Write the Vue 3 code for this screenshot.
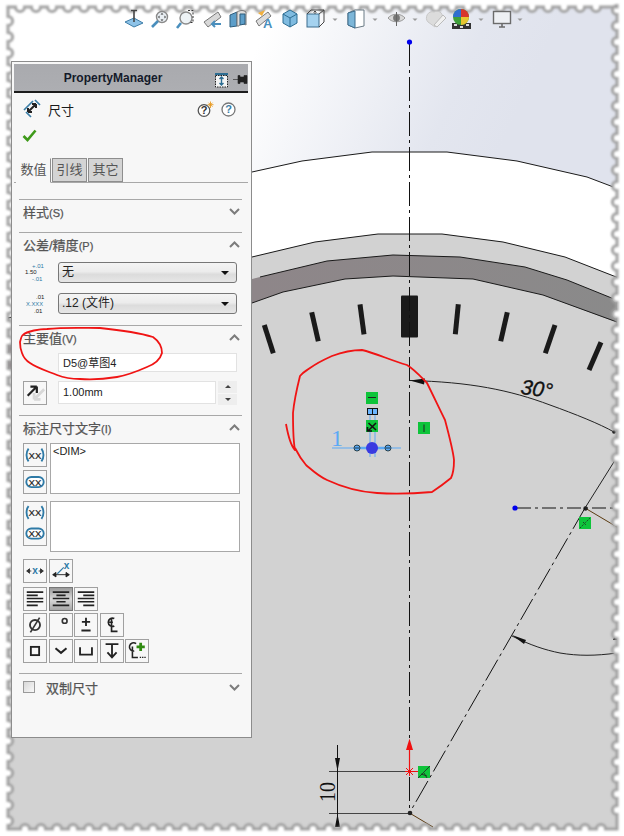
<script setup>
function buildEdge() {
  const L = 8, T = 7, R = 617, B = 829, r = 4.6
  let d = `M${L} ${T}`
  for (let x = 20; x < R - 8; x += 16) d += `L${x - r} ${T}A${r} ${r} 0 0 0 ${x + r} ${T}`
  d += `L${R} ${T}`
  for (let y = 10; y < B - 8; y += 16) d += `L${R} ${y - r}A${r} ${r} 0 0 0 ${R} ${y + r}`
  d += `L${R} ${B}`
  for (let x = 601; x > L + 8; x -= 16) d += `L${x + r} ${B}A${r} ${r} 0 0 0 ${x - r} ${B}`
  d += `L${L} ${B}`
  for (let y = 821; y > T + 8; y -= 16) d += `L${L} ${y + r}A${r} ${r} 0 0 0 ${L} ${y - r}`
  return d + 'Z'
}
const edge = buildEdge()
const outside = `M0 0H624V836H0Z ${edge}`

const ticks = [
  [264.3, 325, 273.3, 353.3], [311.7, 312.3, 318.3, 341.3], [360, 304.3, 364, 334.3],
  [458.3, 304.3, 455.3, 334.3], [507.3, 312.3, 500.7, 341.3], [555, 325, 545.3, 353.3], [601, 342.3, 589, 370]
]
const carets = [335, 375, 415, 481, 520]
const sketchBlue = '#5aa9f5'
</script>

<template>
  <div class="page">
    <svg class="canvas" width="624" height="836" viewBox="0 0 624 836">
      <defs>
        <linearGradient id="sky" gradientUnits="userSpaceOnUse" x1="260" y1="40" x2="500" y2="150">
          <stop offset="0" stop-color="#ffffff" />
          <stop offset="0.75" stop-color="#e3e6ef" />
          <stop offset="1" stop-color="#e0e3ed" />
        </linearGradient>
        <linearGradient id="ring" gradientUnits="userSpaceOnUse" x1="252" y1="0" x2="620" y2="0">
          <stop offset="0" stop-color="#8e8689" />
          <stop offset="1" stop-color="#8a8a8a" />
        </linearGradient>
        <filter id="soft" x="-5%" y="-5%" width="110%" height="110%"><feGaussianBlur stdDeviation="1.1" /></filter>
      </defs>

      <rect width="624" height="836" fill="#d2d2d2" />
      <rect width="624" height="210" fill="url(#sky)" />
      <path d="M0 205L202 188L232 177L302 161L372 152H447L517 161L587 177L624 191V280L565 257L503 242L442 234H378L315 242L252 257L0 320Z" fill="#ffffff" />
      <path d="M202 188L232 177L252 172L302 161L372 152H447L517 161L587 177L624 191" fill="none" stroke="#1a1a1a" stroke-width="1" />
      <path d="M0 320L252 257L315 242L378 234H442L503 242L565 257L624 280V302L567 280L525 267L460 257L393 255L327 261L260 277L0 345Z" fill="#d2d2d2" />
      <path d="M0 320L252 257L315 242L378 234H442L503 242L565 257L624 280" fill="none" stroke="#1a1a1a" stroke-width="1" />
      <path d="M0 345L260 277L327 261L393 255L460 257L525 267L567 280L624 303V325L543 295L473 279L393 276L345 279L283 292L252 303L0 375Z" fill="url(#ring)" />
      <path d="M260 277L327 261L393 255L460 257L525 267L567 280L624 303" fill="none" stroke="#1a1a1a" stroke-width="1" />
      <path d="M252 303L283 292L345 279L393 276L473 279L543 295L617 322" fill="none" stroke="#1a1a1a" stroke-width="1" />

      <line v-for="(t, i) in ticks" :key="i" :x1="t[0]" :y1="t[1]" :x2="t[2]" :y2="t[3]" stroke="#1a1a1a" stroke-width="5" />
      <rect x="401" y="295.5" width="17" height="42" rx="1" fill="#1a1a1a" />

      <line x1="409.5" y1="42" x2="409.5" y2="812" stroke="#111" stroke-width="1" stroke-dasharray="24 4 3 4" />
      <circle cx="409.5" cy="42" r="2.6" fill="#0000ee" />

      <path d="M410 380.5C470 382 510 390 550 405C575 414 600 424 614 432" fill="none" stroke="#222" />
      <path d="M410 380.5L425 378.5L424 384.5Z" fill="#111" />
      <circle cx="614" cy="432" r="1.8" fill="#111" />
      <text x="521" y="396" class="deg" transform="rotate(8 537 388)">30°</text>

      <path d="M517 508H617" fill="none" stroke="#111" stroke-width="1" stroke-dasharray="14 4 3 4" />
      <circle cx="515" cy="508" r="2.6" fill="#0000ee" />
      <line x1="585" y1="508" x2="617" y2="457" stroke="#222" />
      <line x1="585" y1="508" x2="617" y2="527" stroke="#5a3a10" />
      <circle cx="585.5" cy="508.5" r="2.2" fill="#222" />
      <line x1="585" y1="508" x2="409.5" y2="813" stroke="#111" stroke-width="1" stroke-dasharray="24 4 3 4" />

      <path d="M512 636C530 645 545 650 560 653C578 656 595 656 617 653" fill="none" stroke="#222" />
      <path d="M512 635L526 640L524 644Z" fill="#111" />
      <path d="M615 635L613 640H617Z" fill="#111" />

      <rect x="579" y="517" width="12" height="12" fill="#0ec43a" />
      <path d="M580 528L590 518M583 522L586 525" stroke="#222" stroke-width="0.8" stroke-dasharray="1.5 1" />

      <g class="relations">
        <rect x="366" y="392" width="12" height="12" fill="#0ec43a" />
        <line x1="368" y1="397.5" x2="376" y2="397.5" stroke="#222" stroke-width="1" />
        <line x1="370" y1="415" x2="370" y2="457" :stroke="sketchBlue" stroke-width="1.6" opacity="0.6" />
        <line x1="375" y1="415" x2="375" y2="457" :stroke="sketchBlue" stroke-width="1.6" opacity="0.6" />
        <rect x="367.5" y="408.5" width="10" height="6" fill="#6bb6ff" stroke="#111" />
        <line x1="372.5" y1="408" x2="372.5" y2="415" stroke="#111" />
        <rect x="366" y="420" width="12" height="12" fill="#0ec43a" />
        <path d="M368 431L376 423M368.5 423L376 430M367.5 427V431H372" fill="none" stroke="#111" stroke-width="1.6" />
        <rect x="418" y="422" width="12" height="12" fill="#0ec43a" />
        <line x1="424" y1="424.5" x2="424" y2="432" stroke="#222" />
        <line x1="332" y1="448" x2="401" y2="448" :stroke="sketchBlue" stroke-width="1" />
        <line x1="360" y1="448" x2="386" y2="448" :stroke="sketchBlue" stroke-width="2.5" />
        <circle cx="357" cy="448" r="3" :fill="sketchBlue" stroke="#122" stroke-width="0.8" />
        <line x1="355" y1="448" x2="359" y2="448" stroke="#122" stroke-width="0.8" />
        <circle cx="388" cy="448" r="3" :fill="sketchBlue" stroke="#122" stroke-width="0.8" />
        <line x1="386" y1="448" x2="390" y2="448" stroke="#122" stroke-width="0.8" />
        <circle cx="372" cy="448" r="6" fill="#3a3ae0" />
        <text x="331" y="446" class="one">1</text>
      </g>

      <line x1="329" y1="771.5" x2="409" y2="771.5" stroke="#444" stroke-width="1.2" />
      <line x1="329" y1="813.5" x2="409" y2="813.5" stroke="#444" stroke-width="1.2" />
      <line x1="337.5" y1="745" x2="337.5" y2="827" stroke="#111" stroke-width="1" />
      <path d="M335 758H340L337.5 771Z M335 827H340L337.5 814Z" fill="#111" />
      <text class="ten" x="0" y="0" transform="translate(334.5 792) rotate(-90)" text-anchor="middle" textLength="20" lengthAdjust="spacingAndGlyphs">10</text>
      <line x1="409.5" y1="813" x2="433" y2="827" stroke="#5a3a10" stroke-width="1" />
      <circle cx="410" cy="813" r="2.3" fill="#222" />

      <line x1="409.5" y1="745" x2="409.5" y2="771" stroke="#f01010" stroke-width="1.2" />
      <path d="M409.5 738.5L413 750H406Z" fill="#f01010" />
      <path d="M406 768L413 775M413 768L406 775M405 771.5H418M409.5 767V776" stroke="#f01010" stroke-width="1" />
      <rect x="418" y="766" width="12" height="12" fill="#0ec43a" />
      <path d="M418 778L430 766M424 773L427 778M421 774L427 776" stroke="#222" stroke-width="0.8" />

      <!-- edge of the cut-out picture -->
      <path :d="outside" fill="#fff" fill-rule="evenodd" />
      <path :d="edge" fill="none" stroke="#a2a2a2" stroke-width="3" filter="url(#soft)" />

      <!-- heads-up toolbar -->
      <g class="toolbar">
        <path d="M125 22L134 18L143 23L134 27Z" fill="#8ec3e8" stroke="#3d7da8" />
        <line x1="134" y1="10" x2="134" y2="22" stroke="#444" stroke-width="1.6" />
        <line x1="131" y1="10.5" x2="137" y2="10.5" stroke="#444" stroke-width="1.4" />

        <circle cx="162" cy="17" r="5.5" fill="#e8eef3" stroke="#8a8a8a" stroke-width="1.4" />
        <line x1="158" y1="21" x2="152" y2="27" stroke="#4a8fbd" stroke-width="2.6" />
        <path d="M162 13l-1.5 1.5h3zM162 21l-1.5-1.5h3zM158 17l1.5-1.5v3zM166 17l-1.5-1.5v3z" fill="#333" />

        <circle cx="186" cy="18" r="6" fill="#eef3f6" stroke="#8a8a8a" stroke-width="1.4" />
        <line x1="181" y1="23" x2="177" y2="28" stroke="#4a8fbd" stroke-width="2.6" />
        <path d="M188 10.5h5v12h-3" fill="none" stroke="#333" stroke-dasharray="2 1.5" />

        <path d="M204 22L218 12L221 17L208 27Z" fill="#d8d8d8" stroke="#777" />
        <path d="M212 24H221M215 21L212 24L215 27" fill="none" stroke="#4a8fbd" stroke-width="2" />

        <path d="M230 15L237 12V26L230 27Z" fill="#5d9ec9" stroke="#2d5d7d" />
        <path d="M237 12C241 10 243 10 246 12V25C243 23 240 24 239 26H237Z" fill="#ddd" stroke="#777" />
        <path d="M240 14H245V24L240 25Z" fill="#5d9ec9" stroke="#2d5d7d" />

        <path d="M256 21L268 12L271 16L259 26Z" fill="#ddd" stroke="#777" />
        <path d="M258 13L265 10L262 16Z" fill="#f0b040" />
        <text x="263" y="28" class="tool-a">A</text>

        <path d="M290 10L297 14V23L290 27L283 23V14Z" fill="#7fbbe0" stroke="#2d6d92" />
        <path d="M283 14L290 18L297 14M290 18V27" fill="none" stroke="#2d6d92" />

        <rect x="307" y="14" width="12" height="13" fill="#a5d2ef" stroke="#3d6d8d" />
        <path d="M307 14L311 10H324V22L319 27M319 14L324 10" fill="none" stroke="#444" />
        <path d="M315 11V14M315 11L313.5 12.5M315 11L316.5 12.5" fill="none" stroke="#333" stroke-width="0.8" />

        <path d="M348 13L355 10H364V26L355 28L348 25Z" fill="#fff" stroke="#6a7a85" />
        <path d="M348 13L355 11V28L348 25Z" fill="#7db6d8" stroke="#3d6d8d" />

        <path d="M388 18C392 13 401 13 405 18C401 23 392 23 388 18Z" fill="#d8d8d8" stroke="#999" />
        <circle cx="396.5" cy="18" r="3.4" fill="#777" />
        <line x1="396.5" y1="12" x2="396.5" y2="26" stroke="#666" />

        <path d="M435 27L428 22C424 18 428 10 434 12C440 9 445 15 441 21Z" fill="#dcdcdc" stroke="#c8c8c8" />
        <path d="M434 25L443 15L446 18L437 27Z" fill="#f0f0f0" stroke="#bbb" />

        <rect x="452" y="23" width="19" height="6" fill="#333" />
        <path d="M454 24h3v2h-3zM460 26h3v2h-3zM466 24h3v2h-3z" fill="#ddd" />
        <circle cx="461" cy="17" r="8" fill="#3fa03a" />
        <path d="M461 9A8 8 0 0 1 469 17H461Z" fill="#d8352c" />
        <path d="M453 17A8 8 0 0 1 461 9V17Z" fill="#2f6fd0" />
        <path d="M461 17H469A8 8 0 0 1 461 25Z" fill="#e8c630" />

        <rect x="493.5" y="11.5" width="17" height="12" fill="#eef0f4" stroke="#6b6b6b" stroke-width="1.4" />
        <path d="M499 27H505M502 24V27" stroke="#6b6b6b" stroke-width="1.6" fill="none" />

        <path v-for="c in carets" :key="c" :d="`M${c - 2.5} 18.5h5l-2.5 2.5z`" fill="#999" />
      </g>
    </svg>

    <aside class="panel">
      <header class="title">
        <span class="title-text">PropertyManager</span>
        <svg class="title-icons" width="34" height="16" viewBox="0 0 34 16">
          <rect x="1" y="1" width="13" height="2.5" fill="#2d6d92" />
          <rect x="1.5" y="3.5" width="12" height="11.5" fill="#f4f4f4" stroke="#222" stroke-dasharray="1.5 1" />
          <path d="M7.5 5V13M5.5 7L7.5 5L9.5 7M5.5 11L7.5 13L9.5 11" fill="none" stroke="#2d6d92" stroke-width="1.4" />
          <path d="M19 7.5H24M24 3.5H26V11.5H24ZM26 5H30V10H26ZM30 3.5H33V11.5H30Z" fill="#222" stroke="#222" stroke-width="0.6" />
        </svg>
      </header>

      <div class="feature">
        <svg width="20" height="20" viewBox="0 0 20 20">
          <path d="M1 11L10 2M3 13L8 18M12 1L17 6" fill="none" stroke="#3b7ea6" stroke-width="1.7" />
          <path d="M5 13L13 5M13 5H9M13 5V9M5 13V9M5 13H9" fill="none" stroke="#222" stroke-width="2" />
        </svg>
        <span class="feature-name">尺寸</span>
        <svg class="help-new" width="17" height="17" viewBox="0 0 17 17">
          <circle cx="7" cy="9.5" r="5.8" fill="#fff" stroke="#555" stroke-width="1.3" />
          <text x="7" y="13" class="q dark">?</text>
          <path d="M13.5 0.5V7M10.5 3.7H16.5M11.5 1.7L15.5 5.7M15.5 1.7L11.5 5.7" stroke="#e89a20" stroke-width="0.9" />
        </svg>
        <svg class="help" width="15" height="15" viewBox="0 0 15 15">
          <circle cx="7.5" cy="7.5" r="6.5" fill="#fff" stroke="#777" stroke-width="1.3" />
          <text x="7.5" y="11.2" class="q blue">?</text>
        </svg>
      </div>

      <div class="ok">
        <svg width="15" height="13" viewBox="0 0 15 13"><path d="M1.5 7L5.5 11L13.5 1.5" fill="none" stroke="#3f9a1a" stroke-width="2.6" /></svg>
      </div>

      <nav class="tabs">
        <span class="tab active">数值</span>
        <span class="tab">引线</span>
        <span class="tab">其它</span>
      </nav>

      <section class="sec sec-closed">
        <div class="head"><b>样式<small>(S)</small></b><svg class="chev" viewBox="0 0 11 7"><path d="M1 1L5.5 5.5L10 1" /></svg></div>
      </section>

      <section class="sec sec-tol">
        <div class="head"><b>公差/精度<small>(P)</small></b><svg class="chev" viewBox="0 0 11 7"><path d="M1 6L5.5 1.5L10 6" /></svg></div>
        <div class="tol-row">
          <svg class="tol-icon" width="24" height="21" viewBox="0 0 24 21">
            <text x="7" y="5.5" class="mini blue-t">+.01</text>
            <text x="0" y="12" class="mini">1.50</text>
            <text x="7" y="18.5" class="mini blue-t">-.01</text>
          </svg>
          <div class="select">无<i class="tri"></i></div>
        </div>
        <div class="tol-row">
          <svg class="tol-icon" width="24" height="21" viewBox="0 0 24 21">
            <text x="11" y="6" class="mini">.01</text>
            <text x="1" y="13" class="mini blue-t" textLength="17" lengthAdjust="spacingAndGlyphs">X.XXX</text>
            <text x="9" y="20" class="mini">.01</text>
          </svg>
          <div class="select">.12 (文件)<i class="tri"></i></div>
        </div>
      </section>

      <section class="sec sec-main">
        <div class="head"><b>主要值<small>(V)</small></b><svg class="chev" viewBox="0 0 11 7"><path d="M1 6L5.5 1.5L10 6" /></svg></div>
        <div class="field name">D5@草图4</div>
        <div class="value-row">
          <button class="btn">
            <svg viewBox="0 0 24 24">
              <path d="M22 8L11 19M11 19H18M11 19V12" fill="none" stroke="#d8d8d8" stroke-width="3" />
              <path d="M4 15L14 5M14 5H7M14 5V12" fill="none" stroke="#222" stroke-width="2.4" />
            </svg>
          </button>
          <div class="field value">1.00mm</div>
          <div class="spin">
            <span><i class="up"></i></span>
            <span><i class="down"></i></span>
          </div>
        </div>
      </section>

      <section class="sec sec-text">
        <div class="head"><b>标注尺寸文字<small>(I)</small></b><svg class="chev" viewBox="0 0 11 7"><path d="M1 6L5.5 1.5L10 6" /></svg></div>
        <div class="text-row" v-for="(content, i) in ['<DIM>', '']" :key="i">
          <div class="stack" :class="{ split: i === 0 }">
            <svg viewBox="0 0 24 22" class="paren">
              <path d="M5 4C2 8 2 14 5 18M19 4C22 8 22 14 19 18" fill="none" stroke="#2e7aa6" stroke-width="2" />
              <text x="12" y="15" class="xx">XX</text>
            </svg>
            <svg viewBox="0 0 24 22" class="paren">
              <rect x="2.5" y="5.5" width="19" height="11" rx="5.5" fill="#fff" stroke="#2e7aa6" stroke-width="2" />
              <text x="12" y="15" class="xx">XX</text>
            </svg>
          </div>
          <div class="textbox">{{ content }}</div>
        </div>

        <div class="grid first-grid">
          <button class="btn">
            <svg viewBox="0 0 24 24">
              <path d="M3 12H8M21 12H16M3 12L6 9.5V14.5ZM21 12L18 9.5V14.5Z" fill="#333" stroke="#333" />
              <text x="12" y="15.5" class="x-small">x</text>
            </svg>
          </button>
          <button class="btn">
            <svg viewBox="0 0 24 24">
              <path d="M3 16H21M3 16L6.5 13.5V18.5ZM21 16L17.5 13.5V18.5Z" fill="#222" stroke="#222" />
              <line x1="8" y1="15" x2="15" y2="8" stroke="#2e7aa6" stroke-width="1.2" />
              <text x="18" y="9.5" class="x-small">x</text>
            </svg>
          </button>
        </div>
        <div class="grid">
          <button class="btn">
            <svg viewBox="0 0 24 24"><path d="M3 4.5H21M3 8H15M3 11.5H21M3 15H21M3 19H15" stroke="#222" stroke-width="1.8" /></svg>
          </button>
          <button class="btn on">
            <svg viewBox="0 0 24 24"><path d="M3 4.5H21M7 8H17M3 11.5H21M7 15H17M3 19H21" stroke="#222" stroke-width="1.8" /></svg>
          </button>
          <button class="btn">
            <svg viewBox="0 0 24 24"><path d="M3 4.5H21M9 8H21M3 11.5H21M3 15H21M9 19H21" stroke="#222" stroke-width="1.8" /></svg>
          </button>
        </div>
        <div class="grid tight">
          <button class="btn">
            <svg viewBox="0 0 24 24"><circle cx="12" cy="12" r="5.5" fill="none" stroke="#333" stroke-width="2" /><line x1="7" y1="20" x2="17" y2="4" stroke="#333" stroke-width="1.8" /></svg>
          </button>
          <button class="btn">
            <svg viewBox="0 0 24 24"><circle cx="16" cy="7.5" r="2.6" fill="none" stroke="#333" stroke-width="1.8" /></svg>
          </button>
          <button class="btn">
            <svg viewBox="0 0 24 24"><path d="M12 4V13M7.5 8.5H16.5M7 18H17" stroke="#222" stroke-width="2" /></svg>
          </button>
          <button class="btn">
            <svg viewBox="0 0 24 24"><path d="M14.5 5A4.5 4.5 0 1 0 14.5 13M9 9H13M11.5 4V19H18" fill="none" stroke="#222" stroke-width="1.8" /></svg>
          </button>
        </div>
        <div class="grid tight">
          <button class="btn">
            <svg viewBox="0 0 24 24"><rect x="7.5" y="7.5" width="9" height="9" fill="none" stroke="#222" stroke-width="2" /></svg>
          </button>
          <button class="btn">
            <svg viewBox="0 0 24 24"><path d="M6 9L12 14L18 9" fill="none" stroke="#222" stroke-width="2.2" /></svg>
          </button>
          <button class="btn">
            <svg viewBox="0 0 24 24"><path d="M5.5 8V16H18.5V8" fill="none" stroke="#222" stroke-width="2" /></svg>
          </button>
          <button class="btn">
            <svg viewBox="0 0 24 24"><path d="M5 4.5H19M12 4.5V19M7 13.5L12 19L17 13.5" fill="none" stroke="#222" stroke-width="2" /></svg>
          </button>
          <button class="btn">
            <svg viewBox="0 0 24 24">
              <path d="M11 4A4.5 4.5 0 1 0 9 12M7 7V19H13" fill="none" stroke="#222" stroke-width="1.7" />
              <path d="M15 19H22" stroke="#222" stroke-width="1.5" stroke-dasharray="1.5 1" />
              <path d="M16 3V12M11.5 7.5H20.5" stroke="#2f8a10" stroke-width="3" />
            </svg>
          </button>
        </div>
      </section>

      <section class="sec sec-dual">
        <div class="dual">
          <span class="check"></span>
          <span class="dual-label">双制尺寸</span>
          <svg class="chev" viewBox="0 0 11 7"><path d="M1 1L5.5 5.5L10 1" /></svg>
        </div>
      </section>
    </aside>

    <svg class="ink" width="624" height="836" viewBox="0 0 624 836">
      <path d="M23 335C27 331 40 329 47 329C65 327 85 328 100 328C120 330 140 333 153 337C160 342 162 348 162 353C160 360 155 364 147 367C138 371 128 375 117 377C105 379 92 380 80 379C70 379 62 377 57 375C47 371 37 368 30 363C25 360 23 356 22 353C20 348 20 344 20 342C21 338 22 335 23 335Z" />
      <path d="M286 424C288 435 291 446 295 450C293 440 293 425 293 413C294 402 296 392 300 376C303 372 306 371 310 368C320 361 330 357 332 356C340 353 352 350 362 350C375 353 390 360 407 365C415 370 422 378 427 383C433 395 440 410 445 420C449 435 453 450 454 460C454 468 453 474 451 478C445 483 438 488 432 492C420 493 395 494 377 493C360 492 342 487 327 480C318 476 312 470 306 465C300 458 296 450 295 448" />
    </svg>
  </div>
</template>

<style>
html, body { margin: 0; background: #fff; }
</style>

<style scoped>
.page {
  position: relative;
  width: 624px;
  height: 836px;
  overflow: hidden;
  font-family: "Liberation Sans", "Noto Sans CJK SC", sans-serif;
  color: #222;
}
.canvas, .ink {
  position: absolute;
  left: 0;
  top: 0;
  display: block;
}
.ink { pointer-events: none; }
.ink path {
  fill: none;
  stroke: #f01414;
  stroke-width: 1.8;
  stroke-linejoin: round;
}
.deg {
  font: italic 400 21px "Liberation Sans", sans-serif;
  fill: #111;
  stroke: #111;
  stroke-width: 0.35;
}
.one {
  font: 24px "Liberation Serif", serif;
  fill: #5aa9f5;
}
.ten {
  font: 24px "Liberation Serif", serif;
  fill: #111;
}
.tool-a {
  font: 700 13px "Liberation Sans", sans-serif;
  fill: #4a8fbd;
}

.panel {
  position: absolute;
  left: 11px;
  top: 61px;
  width: 241px;
  height: 677px;
  box-sizing: border-box;
  padding: 2px 3px 2px 2px;
  background: #f7f7f7;
  border: 1px solid #8c8c8c;
  display: flex;
  flex-direction: column;
}
.title {
  position: relative;
  flex: none;
  height: 27px;
  display: flex;
  align-items: center;
  justify-content: center;
  padding-right: 36px;
  background: linear-gradient(#a9aaae, #adaeb2);
  border-bottom: 2px solid #1c1c1c;
}
.title-text {
  font-size: 12px;
  font-weight: 700;
  color: #141a2a;
}
.title-icons {
  position: absolute;
  right: 0;
  top: 8px;
}
.feature {
  flex: none;
  height: 32px;
  display: flex;
  align-items: center;
  padding-left: 9px;
}
.feature-name {
  margin-left: 5px;
  font-size: 13px;
  color: #1a1a1a;
}
.help-new { margin-left: auto; }
.help { margin: 0 12px 0 7px; }
.q {
  font: 700 11px "Liberation Sans", sans-serif;
  text-anchor: middle;
}
.q.dark { fill: #333; }
.q.blue { fill: #3b7ea6; }
.ok {
  flex: none;
  height: 21px;
  padding-left: 8px;
  display: flex;
  align-items: center;
}
.tabs {
  flex: none;
  margin-top: 12px;
  padding-left: 2px;
  height: 24px;
  display: flex;
  border-bottom: 1px solid #a8a8a8;
}
.tab {
  width: 35px;
  height: 24px;
  box-sizing: border-box;
  margin-right: 1px;
  border: 1px solid #8e8e8e;
  background: #d4d4d4;
  font-size: 13px;
  line-height: 21px;
  text-align: center;
  color: #555;
}
.tab.active {
  height: 25px;
  background: #f7f7f7;
  border-color: #f7f7f7;
  border-right-color: #8e8e8e;
}
.sec {
  flex: none;
  margin: 0 6px 0 5px;
  border-top: 1px solid #a8a8a8;
}
.sec-closed {
  margin-top: 16px;
  padding-bottom: 5px;
}
.head {
  height: 27px;
  box-sizing: border-box;
  padding: 0 2px 4px 4px;
  display: flex;
  align-items: center;
  justify-content: space-between;
}
.head b {
  font-size: 13px;
  font-weight: 400;
  color: #555;
  -webkit-text-stroke: 0.25px #555;
}
.head small {
  font-size: 11px;
}
.chev {
  width: 11px;
  height: 7px;
  flex: none;
}
.chev path {
  fill: none;
  stroke: #7c7c7c;
  stroke-width: 2;
}
.sec-tol { padding-bottom: 11px; }
.tol-row {
  display: flex;
  align-items: center;
  padding-left: 6px;
  margin-top: 2px;
}
.tol-row + .tol-row { margin-top: 10px; }
.tol-icon {
  width: 24px;
  height: 21px;
  flex: none;
  overflow: visible;
}
.mini {
  font: 6px "Liberation Sans", sans-serif;
  fill: #222;
}
.mini.blue-t { fill: #2e7aa6; }
.select {
  position: relative;
  margin-left: 9px;
  width: 179px;
  height: 21px;
  box-sizing: border-box;
  padding-left: 3px;
  border: 1px solid #777;
  border-radius: 3px;
  background: linear-gradient(#f4f4f4, #ececec 45%, #dcdcdc 60%, #e6e6e6);
  font-size: 12px;
  line-height: 19px;
  color: #222;
}
.tri {
  position: absolute;
  right: 7px;
  top: 8px;
  border: 4px solid transparent;
  border-top: 4px solid #111;
  border-bottom: 0;
}
.field {
  height: 19px;
  box-sizing: border-box;
  padding-left: 4px;
  background: #fff;
  border: 1px solid #e2e2e2;
  font-size: 11px;
  line-height: 18px;
  color: #222;
}
.name {
  margin-left: 39px;
  width: 179px;
}
.value-row {
  display: flex;
  margin: 9px 0 10px 4px;
  height: 24px;
}
.value {
  margin-left: 11px;
  width: 158px;
  height: 23px;
  line-height: 20px;
}
.spin {
  margin-left: 2px;
  width: 19px;
  display: flex;
  flex-direction: column;
  gap: 1px;
}
.spin span {
  flex: 1;
  background: #eeeeee;
  display: flex;
  align-items: center;
  justify-content: center;
}
.spin i {
  border: 3px solid transparent;
  border-top: 0;
  border-bottom: 3px solid #444;
}
.spin i.down {
  border-bottom: 0;
  border-top: 3px solid #444;
}
.btn {
  display: block;
  width: 24px;
  height: 24px;
  box-sizing: border-box;
  padding: 0;
  background: #f7f7f7;
  border: 1px solid #a0a0a0;
}
.btn svg {
  display: block;
  width: 22px;
  height: 22px;
}
.btn.on {
  background: linear-gradient(#9a9a9a, #dadada 50%, #a8a8a8);
  border-color: #777;
}
.text-row {
  display: flex;
  margin-left: 4px;
  margin-bottom: 7px;
  height: 51px;
}
.stack {
  width: 24px;
  height: 45px;
  box-sizing: border-box;
  border: 1px solid #a0a0a0;
  flex: none;
  background: #f7f7f7;
}
.paren {
  display: block;
  width: 22px;
  height: 21px;
}
.stack.split {
  height: 51px;
  border: 0;
  background: none;
  display: flex;
  flex-direction: column;
  gap: 3px;
}
.split .paren {
  width: 24px;
  height: 24px;
  box-sizing: border-box;
  border: 1px solid #a0a0a0;
}
.xx {
  font: 400 10.5px "Liberation Sans", sans-serif;
  text-anchor: middle;
  fill: #222;
  stroke: #222;
  stroke-width: 0.2;
}
.textbox {
  margin-left: 3px;
  width: 190px;
  height: 51px;
  box-sizing: border-box;
  border: 1px solid #a8a8a8;
  background: #fff;
  padding: 0 2px;
  font-size: 11px;
  line-height: 14px;
  color: #222;
}
.x-small {
  font: 700 11px "Liberation Sans", sans-serif;
  text-anchor: middle;
  fill: #2e7aa6;
}
.grid {
  display: grid;
  grid-template-columns: 26px 25px 26px 25px 24px;
  margin-left: 4px;
  margin-bottom: 2px;
}
.first-grid {
  margin-top: 2px;
  margin-bottom: 4px;
}
.grid.tight:last-child { margin-bottom: 10px; }
.dual {
  height: 28px;
  box-sizing: border-box;
  padding: 0 2px 2px 4px;
  display: flex;
  align-items: center;
}
.check {
  width: 12px;
  height: 12px;
  box-sizing: border-box;
  border: 1px solid #9a9a9a;
  background: linear-gradient(135deg, #d8d8d8, #f8f8f8);
}
.dual-label {
  margin-left: 11px;
  font-size: 13px;
  color: #555;
  -webkit-text-stroke: 0.25px #555;
}
.dual .chev { margin-left: auto; }
</style>
